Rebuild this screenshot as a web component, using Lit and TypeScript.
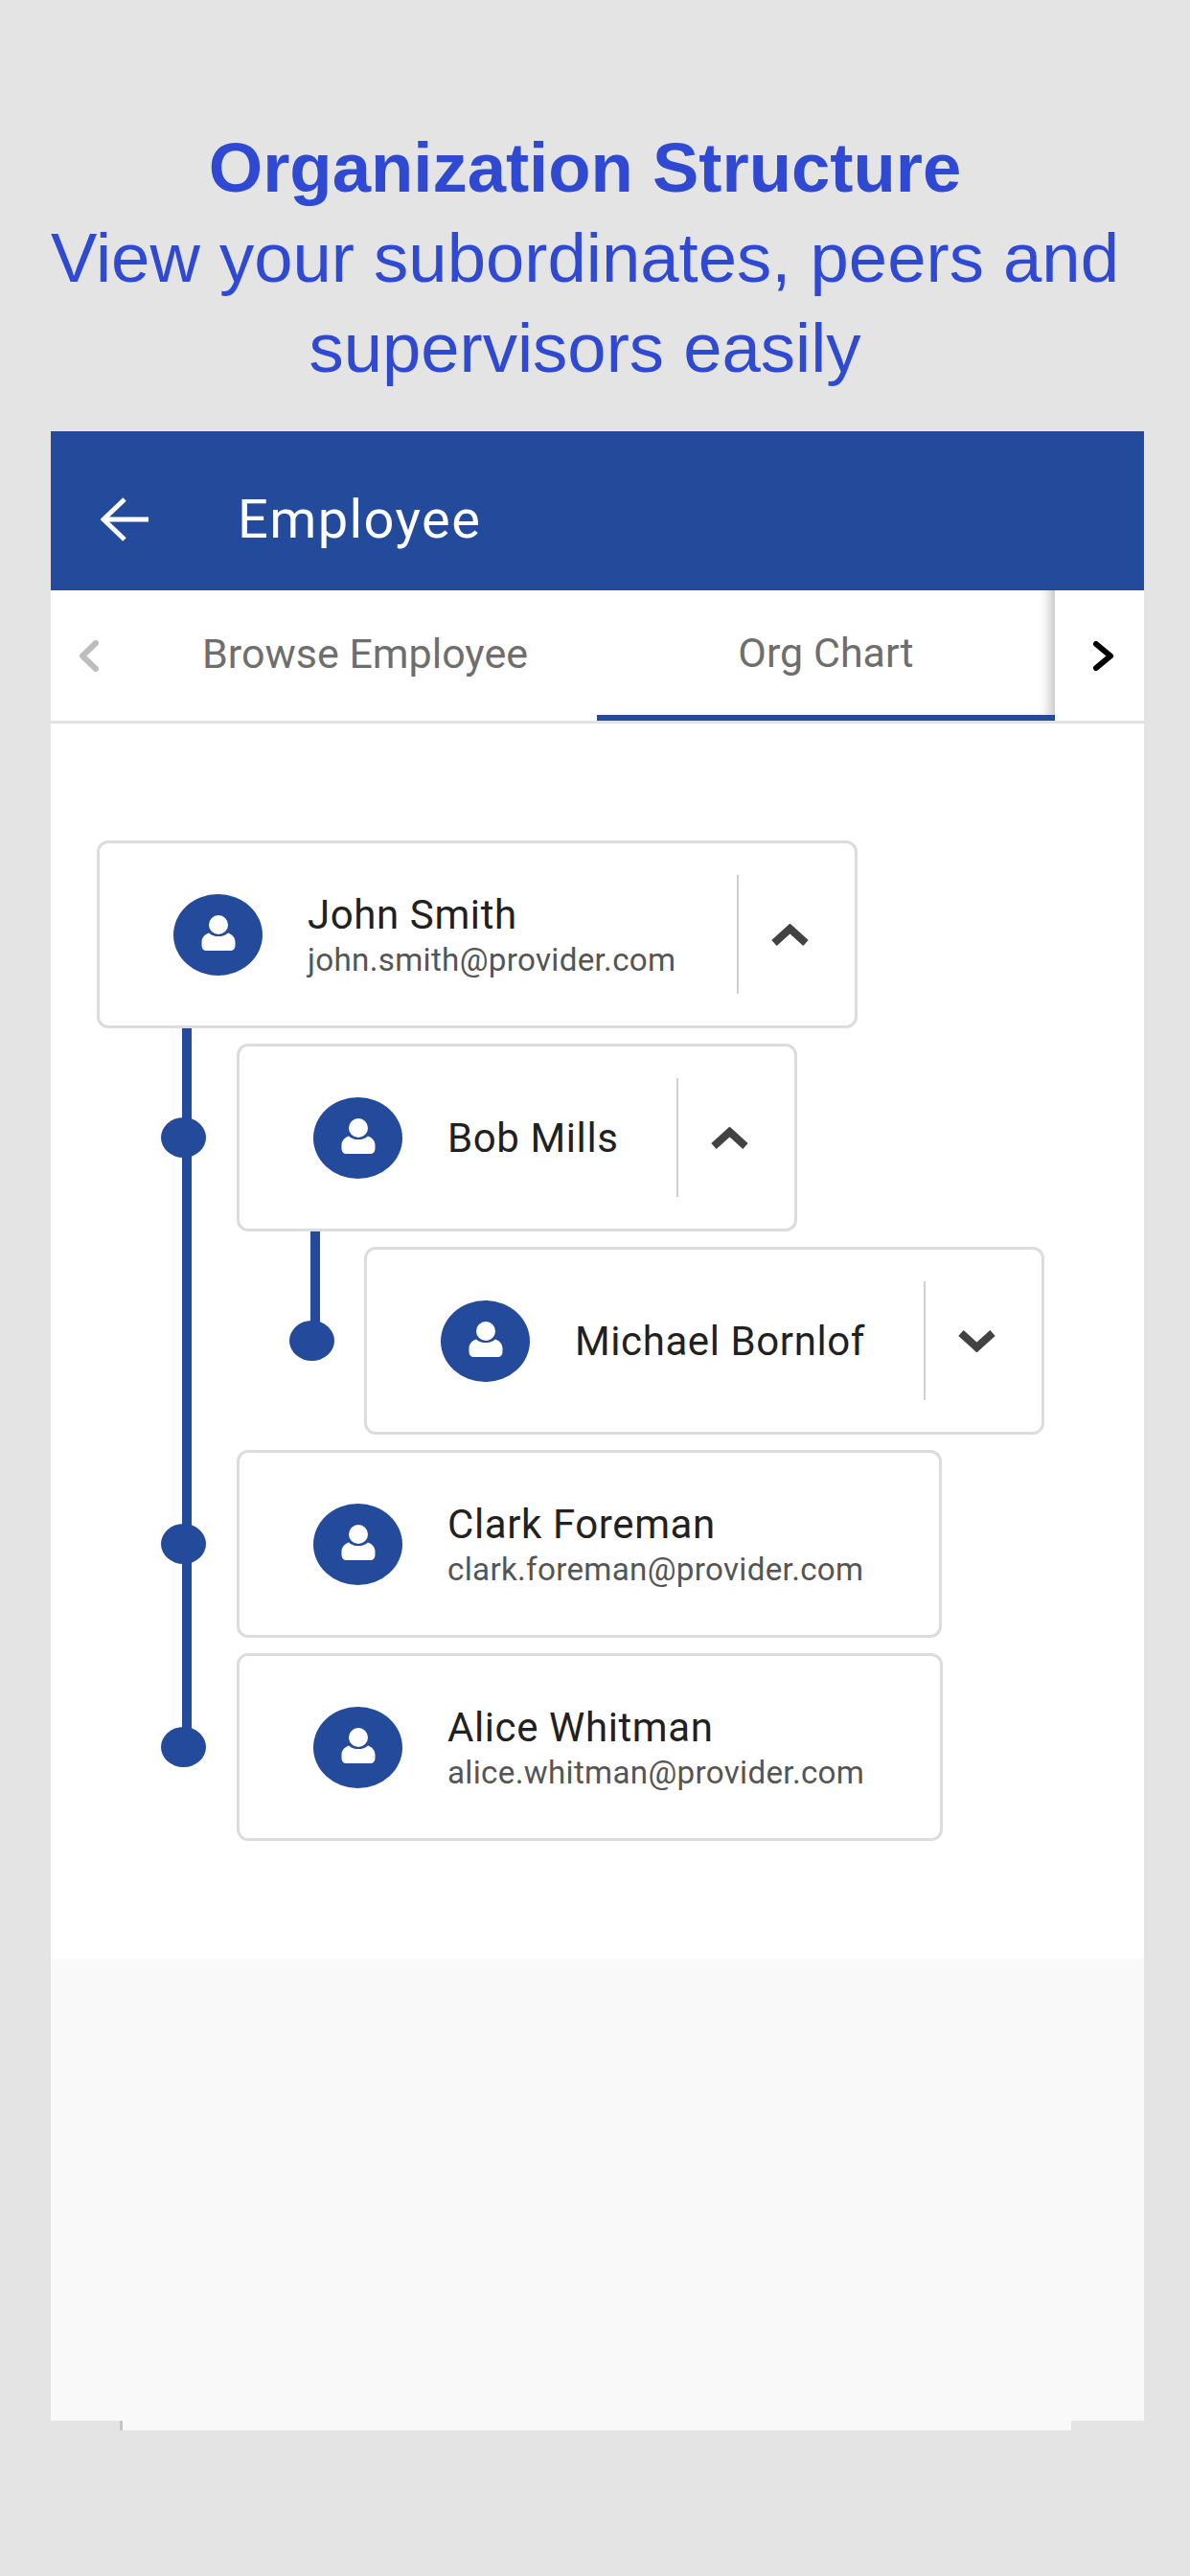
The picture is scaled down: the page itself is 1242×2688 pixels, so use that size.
import { LitElement, css, html, nothing } from "lit";
import { customElement } from "lit/decorators.js";

type OrgNode = {
	name: string;
	email?: string;
	depth: 0 | 1 | 2;
	width: number;
	toggle?: "up" | "down";
	dot?: boolean;
};

const nodes: OrgNode[] = [
	{ name: "John Smith", email: "john.smith@provider.com", depth: 0, width: 794, toggle: "up" },
	{ name: "Bob Mills", depth: 1, width: 585, toggle: "up", dot: true },
	{ name: "Michael Bornlof", depth: 2, width: 710, toggle: "down", dot: true },
	{ name: "Clark Foreman", email: "clark.foreman@provider.com", depth: 1, width: 736, dot: true },
	{ name: "Alice Whitman", email: "alice.whitman@provider.com", depth: 1, width: 737, dot: true },
];

const backArrow = html`<svg class="back" viewBox="0 0 50 46" width="50" height="46" fill="none" stroke="#fff" stroke-width="5">
	<path d="M50 23H4M25 2 3 23l22 21" />
</svg>`;

const tabChevron = (dir: "left" | "right") =>
	html`<svg class="tab-chevron ${dir}" viewBox="0 0 23 33" width="23" height="33" fill="none" stroke-width="6" stroke-linecap="round" stroke-linejoin="round">
		<path d=${dir === "left" ? "M19 3 5 16.5 19 30" : "M4 4l15 12.5L4 29"} />
	</svg>`;

const person = html`<svg class="person" viewBox="0 0 36 37" width="36" height="37" fill="#fff">
	<circle cx="18" cy="10" r="10" />
	<path d="M8 18.500c3 2.600 6 3.600 10 3.600s7-1 10-3.600c4.500 1.500 7.500 5 7.500 9.500v3c0 3.500-1.500 6-5 6H5.500c-3.500 0-5-2.500-5-6v-3c0-4.500 3-8 7.500-9.500z" />
</svg>`;

const toggleChevron = (dir: "up" | "down") =>
	html`<svg class="toggle" viewBox="0 0 39 23" width="39" height="23" fill="none" stroke="#424242" stroke-width="8" stroke-linejoin="miter">
		<path d=${dir === "up" ? "M3 20 19.500 5 36 20" : "M3 3l16.500 15L36 3"} />
	</svg>`;

@customElement("app-root")
export class AppRoot extends LitElement {
	static styles = css`
		:host {
			display: block;
			width: 1242px;
			height: 2688px;
			background: #e4e4e4;
			overflow: hidden;
			font-family: Roboto, "Liberation Sans", sans-serif;
		}
		.headline {
			margin: 0;
			padding: 128px 21px 0 0;
			font-family: "Liberation Sans", Arial, sans-serif;
			font-size: 72.500px;
			font-weight: 400;
			line-height: 94px;
			color: #3049d2;
			text-align: center;
		}
		.headline strong {
			display: block;
			font-weight: 700;
		}
		.panel {
			width: 1141px;
			margin: 40px 0 0 53px;
			background: #f9f9f9;
			height: 2076px;
		}
		.appbar {
			display: flex;
			align-items: center;
			gap: 93px;
			height: 166px;
			box-sizing: border-box;
			padding: 17px 0 0 52px;
			background: #234a9b;
			color: #fff;
			font-size: 56px;
			letter-spacing: 1.400px;
		}
		.tabs {
			display: flex;
			height: 136px;
			background: #fff;
			border-bottom: 3px solid #e2e2e2;
			color: #6e6e6e;
			font-size: 43px;
		}
		.tab-arrow {
			display: flex;
			align-items: center;
			justify-content: center;
			flex: none;
			box-sizing: border-box;
		}
		.tab-arrow.start {
			width: 78px;
		}
		.tab-arrow.end {
			width: 93px;
			padding-left: 8px;
		}
		.tab-chevron.left {
			stroke: #bdbdbd;
		}
		.tab-chevron.right {
			stroke: #000;
		}
		.tab {
			display: flex;
			align-items: center;
			justify-content: center;
			padding-bottom: 4px;
			box-sizing: border-box;
		}
		.tab.browse {
			width: 492px;
			padding-left: 8px;
		}
		.tab.org {
			width: 478px;
			border-bottom: 6px solid #234a9b;
			box-shadow: inset -14px 0 14px -10px rgba(0, 0, 0, 0.28);
			padding-bottom: 0;
		}
		.content {
			position: relative;
			display: flex;
			flex-direction: column;
			gap: 16px;
			height: 1289px;
			padding: 122px 0 0 48px;
			box-sizing: border-box;
			background: #fff;
		}
		.row {
			position: relative;
		}
		.depth-1 {
			padding-left: 146px;
		}
		.depth-2 {
			padding-left: 279px;
		}
		.trunk,
		.branch {
			position: absolute;
			width: 10px;
			background: #234a9b;
		}
		.trunk {
			left: 137px;
			top: 317px;
			height: 745px;
		}
		.branch {
			left: 271px;
			top: 529px;
			height: 106px;
		}
		.dot {
			position: absolute;
			top: 77px;
			width: 47px;
			height: 42px;
			border-radius: 50%;
			background: #234a9b;
		}
		.depth-1 .dot {
			left: 67px;
		}
		.depth-2 .dot {
			left: 201px;
		}
		.card {
			display: flex;
			align-items: center;
			height: 196px;
			box-sizing: border-box;
			padding-left: 77px;
			background: #fff;
			border: 3px solid #dcdcdc;
			border-radius: 12px;
		}
		.avatar {
			display: flex;
			align-items: center;
			justify-content: center;
			flex: none;
			width: 93px;
			height: 85px;
			margin-right: 47px;
			border-radius: 50%;
			background: #234a9b;
		}
		.person {
			margin-top: -4px;
		}
		.text {
			flex: 1;
			min-width: 0;
		}
		.text.two-line {
			padding-top: 6px;
		}
		.name {
			font-size: 42px;
			line-height: 47px;
			letter-spacing: 0.6px;
			color: #212121;
		}
		.email {
			font-size: 33.200px;
			line-height: 47px;
			letter-spacing: 0.3px;
			color: #555;
		}
		.action {
			display: flex;
			align-items: center;
			flex: none;
			width: 123px;
			height: 124px;
			padding-left: 34px;
			box-sizing: border-box;
			border-left: 2px solid #cfcfcf;
		}
		.footer {
			width: 993px;
			height: 10px;
			margin-left: 125px;
			box-sizing: border-box;
			background: #f9f9f9;
			border-left: 3px solid #c4c4c4;
		}
	`;

	private renderNode(node: OrgNode) {
		return html`
			<div class="row depth-${node.depth}">
				${node.dot ? html`<span class="dot"></span>` : nothing}
				<div class="card" style="width: ${node.width}px">
					<span class="avatar">${person}</span>
					<div class="text ${node.email ? "two-line" : ""}">
						<div class="name">${node.name}</div>
						${node.email ? html`<div class="email">${node.email}</div>` : nothing}
					</div>
					${node.toggle ? html`<div class="action">${toggleChevron(node.toggle)}</div>` : nothing}
				</div>
			</div>
		`;
	}

	render() {
		return html`
			<h1 class="headline">
				<strong>Organization Structure</strong>
				View your subordinates, peers and<br />supervisors easily
			</h1>
			<section class="panel">
				<header class="appbar">${backArrow}<span>Employee</span></header>
				<nav class="tabs">
					<div class="tab-arrow start">${tabChevron("left")}</div>
					<div class="tab browse">Browse Employee</div>
					<div class="tab org">Org Chart</div>
					<div class="tab-arrow end">${tabChevron("right")}</div>
				</nav>
				<div class="content">
					<span class="trunk"></span>
					<span class="branch"></span>
					${nodes.map((node) => this.renderNode(node))}
				</div>
			</section>
			<div class="footer"></div>
		`;
	}
}
